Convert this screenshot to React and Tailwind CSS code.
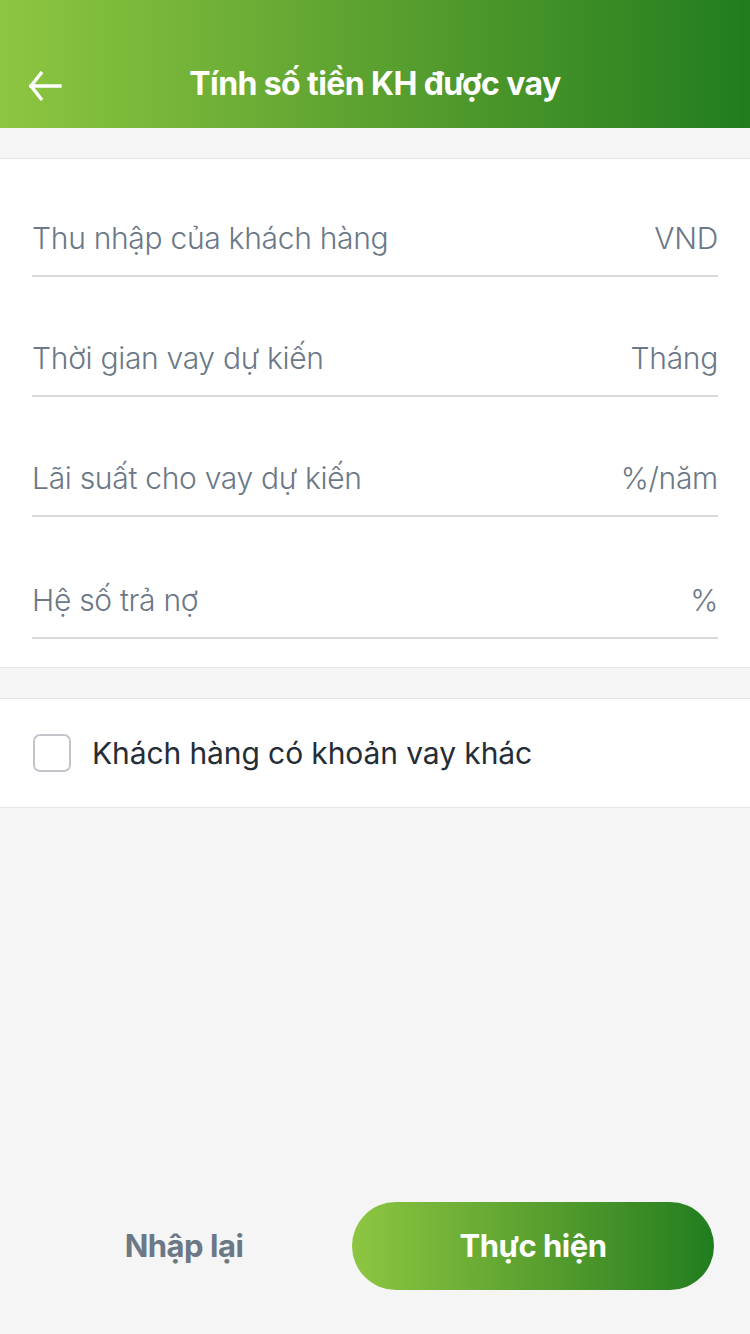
import React from "react";

const rows = [
  { label: "Thu nhập của khách hàng", unit: "VND", h: "h-[118px]" },
  { label: "Thời gian vay dự kiến", unit: "Tháng", h: "h-[120px]" },
  { label: "Lãi suất cho vay dự kiến", unit: "%/năm", h: "h-[120px]" },
  { label: "Hệ số trả nợ", unit: "%", h: "h-[122px]" },
];

export default function App() {
  return (
    <div className="w-[750px] h-[1334px] bg-[#f4f5f4] flex flex-col" style={{ fontFamily: "Inter, 'Noto Sans', sans-serif" }}>
      <div className="h-[128px] shrink-0 bg-gradient-to-r from-[#8dc641] to-[#1f7d1f] flex items-end pb-[24px] relative">
        <div className="absolute left-[26px] top-[68px]">
          <svg width="38" height="36" viewBox="0 0 38 36" fill="none" stroke="white" strokeWidth="3.4" strokeLinecap="square">
            <path d="M34 18 H5" />
            <path d="M16 4 L5 18 L16 32" strokeLinecap="butt" />
          </svg>
        </div>
        <div className="w-full text-center text-white font-bold text-[32px] leading-[40px] tracking-[-0.6px]">Tính số tiền KH được vay</div>
      </div>
      <div className="h-[30px] shrink-0" />
      <div className="bg-white border-t border-b border-[#e3e5e6] px-[32px] pb-[28px]">
        {rows.map((r) => (
          <div key={r.label} className={`${r.h} flex items-end justify-between pb-[19px] border-b-2 border-[#d9dadb] font-light text-[30px] leading-[36px] tracking-[-0.3px] text-[#6b7886]`}>
            <span>{r.label}</span>
            <span>{r.unit}</span>
          </div>
        ))}
      </div>
      <div className="h-[30px] shrink-0" />
      <div className="bg-white border-t border-b border-[#e3e5e6] h-[110px] flex items-center px-[33px] gap-[21px]">
        <div className="w-[38px] h-[38px] rounded-[7px] border-2 border-[#c2c6cc]" />
        <span className="text-[30px] leading-[36px] text-[#252d36] tracking-[-0.1px]">Khách hàng có khoản vay khác</span>
      </div>
      <div className="flex-1" />
      <div className="flex items-center pb-[44px] pr-[36px]">
        <div className="w-[352px] pl-[16px] text-center text-[31px] font-bold text-[#6d7886] tracking-[-0.5px]">Nhập lại</div>
        <div className="w-[362px] h-[88px] rounded-full bg-gradient-to-r from-[#8dc641] to-[#1f7d1f] flex items-center justify-center text-white font-bold text-[31px] tracking-[-0.5px]">Thực hiện</div>
      </div>
    </div>
  );
}
